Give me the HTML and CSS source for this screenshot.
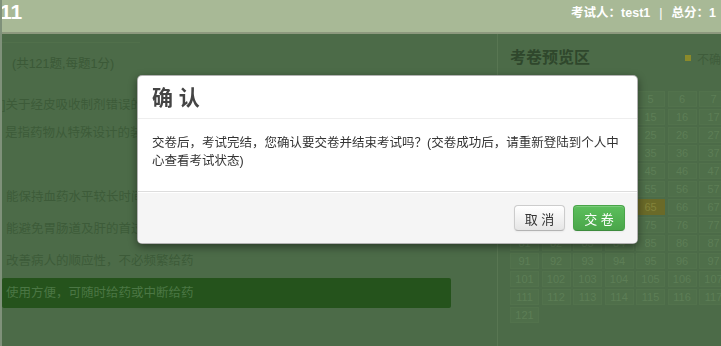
FILE: index.html
```html
<!DOCTYPE html>
<html lang="zh-CN">

<head>
    <meta charset="UTF-8">
    <title>在线考试 | 交卷确认</title>
    <link rel="stylesheet" href="styles.css">
</head>

<body>
    <header id="topBar">
        <h1 id="topBar-title">11</h1>
        <div id="topBar-user">考试人：<b>test1</b><span class="sep">|</span>总分：1</div>
    </header>
    <main id="exam">
        <section id="questions">
            <div class="questions-tab"></div>
            <p class="paper-info">(共121题,每题1分)</p>
            <div class="question">
                <p class="question-stem">]关于经皮吸收制剂错误的表述是</p>
                <p class="question-stem">是指药物从特殊设计的装置释放，通过完整皮肤进入全身循环的给药系统</p>
                <ul class="options">
                    <li class="option">能保持血药水平较长时间稳定在治疗有效浓度范围内</li>
                    <li class="option">能避免胃肠道及肝的首过作用</li>
                    <li class="option">改善病人的顺应性，不必频繁给药</li>
                    <li class="option option-checked">使用方便，可随时给药或中断给药</li>
                </ul>
            </div>
        </section>
        <aside id="preview">
            <div class="preview-header">
                <h2 class="preview-title">考卷预览区</h2>
                <span class="legend"><i class="legend-dot"></i>不确定</span>
            </div>
            <div id="cards"></div>
        </aside>
    </main>
    <div class="modal-layer">
        <div class="modal">
            <div class="modal-header">
                <h3 class="modal-title">确 认</h3>
            </div>
            <div class="modal-body">
                交卷后，考试完结，您确认要交卷并结束考试吗？(交卷成功后，请重新登陆到个人中心查看考试状态)
            </div>
            <div class="modal-footer">
                <button class="btn">取 消</button>
                <button class="btn btn-success">交 卷</button>
            </div>
        </div>
    </div>
    <script>
        var cardContainer = document.getElementById('cards');
        var flagged = [65];
        var html = '';
        for (var i = 1; i <= 121; i++) {
            var cls = flagged.indexOf(i) > -1 ? 'card card-flagged' : 'card';
            html += `<span class="${cls}">${i}</span>`;
        }
        cardContainer.innerHTML = html;
    </script>
</body>

</html>
```

FILE: styles.css
```css
html,
button {
    font-family: 'Liberation Sans', 'Noto Sans CJK SC', sans-serif;
}

body {
    margin: 0;
    width: 721px;
    height: 346px;
    overflow: hidden;
    background: #4c6b48;
    border-left: 2px solid #7f917a;
    box-sizing: border-box;
}

#topBar {
    height: 32px;
    border-bottom: 2px solid #8d997e;
    background: #a8b996;
    display: flex;
    justify-content: space-between;
    align-items: flex-start;
    overflow: hidden;
}

#topBar-title {
    margin: 0 0 0 -2px;
    font-size: 21px;
    line-height: 21px;
    padding-top: 1px;
    color: #fff;
}

#topBar-user {
    padding-top: 5px;
    margin-right: 5px;
    font-size: 12.5px;
    line-height: 16px;
    font-weight: bold;
    color: #fff;
    white-space: nowrap;
}

#topBar-user .sep {
    margin: 0 9px;
    font-weight: normal;
}

#exam {
    display: flex;
    height: 312px;
}

#questions {
    width: 495px;
    flex-shrink: 0;
    font-size: 12.5px;
}

.questions-tab {
    width: 138px;
    height: 8px;
    border-bottom: 1px solid #51704b;
}

.paper-info {
    margin: 12px 0 0 0;
    padding-left: 10px;
    line-height: 18px;
    color: #3b5937;
}

.question-stem {
    margin: 0;
    line-height: 28px;
    color: #3d5b39;
    white-space: nowrap;
    overflow: hidden;
}

.question-stem:first-child {
    margin-top: 18px;
}

.question-stem + .question-stem {
    padding-left: 3px;
}

.options {
    list-style: none;
    margin: 35px 0 0 0;
    padding: 0;
    display: flex;
    flex-direction: column;
    gap: 2px;
}

.option {
    width: 445px;
    height: 30px;
    line-height: 30px;
    padding-left: 4px;
    color: #3d5b39;
    white-space: nowrap;
    overflow: hidden;
}

.option-checked {
    background: #25531c;
    color: #4b7744;
    border-radius: 2px;
}

#preview {
    width: 330px;
    flex-shrink: 0;
    border-left: 1px solid #587652;
    padding: 14px 0 0 12px;
}

.preview-header {
    display: flex;
    align-items: center;
}

.preview-title {
    margin: 0;
    font-size: 16px;
    line-height: 20px;
    color: #2f472c;
}

.legend {
    margin-left: 95px;
    font-size: 12px;
    color: #3f5c3b;
    display: flex;
    align-items: center;
}

.legend-dot {
    width: 6px;
    height: 6px;
    margin-right: 6px;
    background: #8b8a2a;
}

#cards {
    margin-top: 23px;
    display: grid;
    grid-template-columns: repeat(10, 29px);
    column-gap: 2.5px;
    row-gap: 2px;
}

.card {
    height: 16px;
    line-height: 16px;
    text-align: center;
    font-size: 11px;
    background: #4f6f4a;
    box-shadow: inset 0 0 0 1px #52724c;
    color: #5d7e56;
}

.card-flagged {
    background: #6a6a28;
    box-shadow: none;
    color: #83833a;
}

.modal-layer {
    position: fixed;
    inset: 0;
}

.modal {
    position: absolute;
    left: 137px;
    top: 75px;
    width: 501px;
    box-sizing: border-box;
    background: #fff;
    border: 1px solid rgba(0, 0, 0, .3);
    border-radius: 5px;
    box-shadow: 0 3px 8px rgba(0, 0, 0, .45);
    overflow: hidden;
}

.modal-header {
    padding: 10px 14px 8px;
    border-bottom: 1px solid #eee;
}

.modal-title {
    margin: 0;
    font-size: 21px;
    line-height: 24px;
    color: #444;
}

.modal-body {
    padding: 15px 14px 21px;
    font-size: 12.5px;
    line-height: 18px;
    color: #333;
}

.modal-footer {
    padding: 13px 12px 12px;
    background: #f5f5f5;
    border-top: 1px solid #ddd;
    box-shadow: inset 0 1px 0 #fff;
    display: flex;
    justify-content: flex-end;
    gap: 8px;
}

.btn {
    width: 51px;
    height: 26px;
    padding: 0;
    font-size: 13px;
    color: #333;
    background: linear-gradient(#fff, #e6e6e6);
    border: 1px solid #ccc;
    border-bottom-color: #b3b3b3;
    border-radius: 4px;
    box-shadow: inset 0 1px 0 rgba(255, 255, 255, .2), 0 1px 2px rgba(0, 0, 0, .05);
}

.btn-success {
    width: 52px;
    color: #fff;
    background: linear-gradient(#5cbf5c, #4aa64a);
    border-color: #48a448 #48a448 #3d8b3d;
}
```
